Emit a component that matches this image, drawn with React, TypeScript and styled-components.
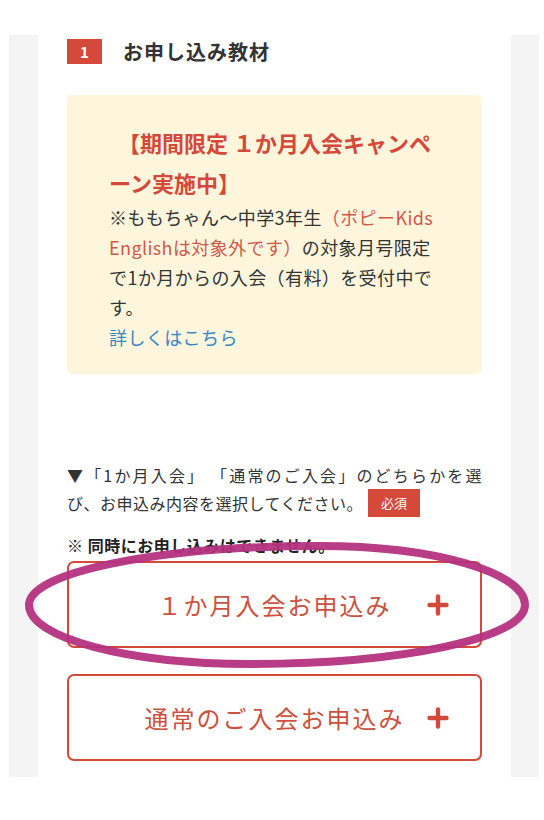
import styled, { createGlobalStyle } from 'styled-components';

const red = '#d4493a';
const softRed = '#d0594a';
const text = '#333333';

const GlobalStyle = createGlobalStyle`
  html, body {
    margin: 0;
    padding: 0;
    background: #ffffff;
  }
  body {
    font-family: "Noto Sans CJK JP", "Noto Sans", sans-serif;
    color: ${text};
  }
`;

function PlusIcon() {
  return (
    <svg width="22" height="22" viewBox="0 0 22 22">
      <path d="M11 2.5 V19.5 M2.5 11 H19.5" stroke={red} strokeWidth="4.4" strokeLinecap="round" fill="none" />
    </svg>
  );
}

// hand drawn marker loop, lies over the first choice
function MarkerLoop() {
  return (
    <Overlay viewBox="0 0 544 820" width="544" height="820">
      <path
        d="M29 605 C29 572 159 546 320 546 C433 546 525 572 525 605 C525 638 402 664 250 664 C128 664 29 638 29 605 Z"
        fill="none"
        stroke="#b5317f"
        strokeWidth="8"
        opacity="0.95"
      />
    </Overlay>
  );
}

export default function App() {
  return (
    <Page>
      <GlobalStyle />
      <Frame>
        <Sheet>
          <SectionHead>
            <StepBadge>1</StepBadge>
            <SectionTitle>お申し込み教材</SectionTitle>
          </SectionHead>

          <Notice>
            <NoticeTitle>
              【期間限定 １か月入会キャンペ<br />ーン実施中】
            </NoticeTitle>
            <NoticeBody>
              ※ももちゃん〜中学3年生<Accent>（ポピーKids<br />Englishは対象外です）</Accent>の対象月号限定<br />
              で1か月からの入会（有料）を受付中で<br />す。
            </NoticeBody>
            <NoticeLink href="#">詳しくはこちら</NoticeLink>
          </Notice>

          <Instruction>
            <JustifiedLine>▼「1か月入会」 「通常のご入会」のどちらかを選</JustifiedLine>
            <Line>
              び、お申込み内容を選択してください。<Required>必須</Required>
            </Line>
          </Instruction>

          <Caution>※ 同時にお申し込みはできません。</Caution>

          <Choices>
            <ChoiceButton type="button">
              <ChoiceLabel>１か月入会お申込み</ChoiceLabel>
              <ChoiceIcon><PlusIcon /></ChoiceIcon>
            </ChoiceButton>
            <ChoiceButton type="button">
              <ChoiceLabel>通常のご入会お申込み</ChoiceLabel>
              <ChoiceIcon><PlusIcon /></ChoiceIcon>
            </ChoiceButton>
          </Choices>
        </Sheet>
      </Frame>
      <MarkerLoop />
    </Page>
  );
}

const Page = styled.div`
  position: relative;
  width: 544px;
  height: 820px;
  padding: 35px 5px 0 9px;
  box-sizing: border-box;
`;

const Overlay = styled.svg`
  position: absolute;
  top: 0;
  left: 0;
  pointer-events: none;
`;

const Frame = styled.div`
  width: 530px;
  background: #f4f4f4;
  padding: 0 28px 0 29px;
  box-sizing: border-box;
`;

const Sheet = styled.div`
  background: #ffffff;
  padding: 4px 29px 16px;
  display: flex;
  flex-direction: column;
`;

const SectionHead = styled.div`
  display: flex;
  align-items: center;
  gap: 21px;
  height: 25px;
`;

const StepBadge = styled.span`
  width: 35px;
  height: 25px;
  background: ${red};
  color: #fff;
  font-size: 15px;
  font-weight: 700;
  display: flex;
  align-items: center;
  justify-content: center;
`;

const SectionTitle = styled.h2`
  margin: 0;
  font-size: 20px;
  font-weight: 700;
  letter-spacing: 1px;
  color: ${text};
`;

const Notice = styled.div`
  margin-top: 31px;
  background: #fdf6dd;
  border-radius: 5px;
  padding: 27px 20px 22px 42px;
`;

const NoticeTitle = styled.p`
  margin: 0;
  font-size: 22px;
  line-height: 40px;
  font-weight: 700;
  color: ${red};
  white-space: nowrap;
  // the opening bracket keeps its blank half at the line start
  text-indent: 9px;
`;

const NoticeBody = styled.p`
  margin: 0;
  font-size: 18px;
  line-height: 30px;
  letter-spacing: 0.4px;
  color: ${text};
  white-space: nowrap;
`;

const Accent = styled.span`
  color: ${softRed};
`;

const NoticeLink = styled.a`
  display: block;
  font-size: 18px;
  line-height: 30px;
  letter-spacing: 0.4px;
  color: #3b86c6;
  text-decoration: none;
`;

const Instruction = styled.div`
  margin-top: 87px;
  font-size: 16px;
  line-height: 28px;
  letter-spacing: 0.5px;
  color: ${text};
`;

const JustifiedLine = styled.div`
  text-align: justify;
  text-align-last: justify;
  text-justify: inter-character;
`;

const Line = styled.div`
  display: flex;
  align-items: center;
`;

const Required = styled.span`
  margin-left: 5px;
  width: 52px;
  height: 28px;
  background: ${red};
  color: #fff;
  font-size: 13px;
  letter-spacing: 0;
  display: inline-flex;
  align-items: center;
  justify-content: center;
`;

const Caution = styled.p`
  margin: 16px 0 0;
  font-size: 16px;
  line-height: 24px;
  font-weight: 700;
  letter-spacing: 0.5px;
  color: #222;
`;

const Choices = styled.div`
  margin-top: 4px;
  display: flex;
  flex-direction: column;
  gap: 26px;
`;

const ChoiceButton = styled.button`
  height: 87px;
  display: grid;
  grid-template-columns: 1fr auto 1fr;
  align-items: center;
  padding: 0 31px;
  background: #fff;
  border: 2px solid ${red};
  border-radius: 7px;
  font-family: inherit;
  cursor: pointer;
`;

const ChoiceLabel = styled.span`
  grid-column: 2;
  font-size: 24px;
  font-weight: 400;
  letter-spacing: 2px;
  color: #cc513e;
  white-space: nowrap;
`;

const ChoiceIcon = styled.span`
  grid-column: 3;
  justify-self: end;
  display: flex;
`;
